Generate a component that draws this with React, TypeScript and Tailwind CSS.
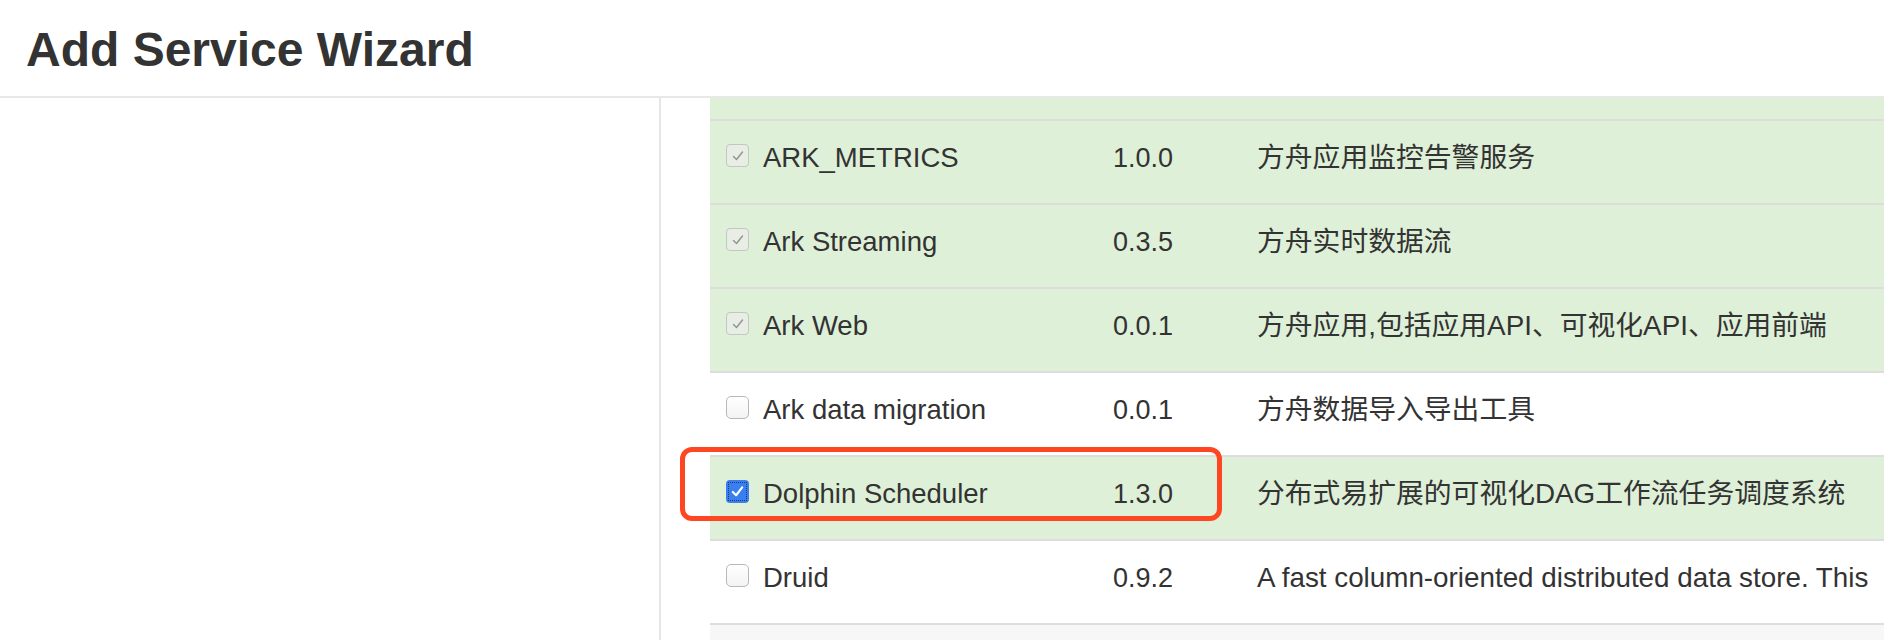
import React from "react";

type Kind = "locked" | "checked" | "empty";

function Check({ kind }: { kind: Kind }) {
  if (kind === "locked") {
    return (
      <span className="mt-[6px] flex h-[23px] w-[23px] shrink-0 items-center justify-center rounded-[4px] border border-[#c2c7bf] bg-[#e8ede5]">
        <svg width="16" height="16" viewBox="0 0 16 16" fill="none">
          <path d="M3.5 8.5 L6.5 11.5 L12.5 4" stroke="#8f958c" strokeWidth="1.4" strokeLinecap="round" strokeLinejoin="round" />
        </svg>
      </span>
    );
  }
  if (kind === "checked") {
    return (
      <span className="mt-[6px] flex h-[23px] w-[23px] shrink-0 items-center justify-center rounded-[4px] bg-[#3a7ff2]">
        <span className="flex h-[19px] w-[19px] items-center justify-center border border-dotted border-[#2a3550]">
          <svg width="15" height="15" viewBox="0 0 16 16" fill="none">
            <path d="M3 8.5 L6.5 12 L13 3.5" stroke="#ffffff" strokeWidth="2.2" strokeLinecap="round" strokeLinejoin="round" />
          </svg>
        </span>
      </span>
    );
  }
  return (
    <span className="mt-[6px] block h-[23px] w-[23px] shrink-0 rounded-[5px] border border-[#b8b8b8] bg-gradient-to-b from-white to-[#f3f3f3]" />
  );
}

const rows: { name: string; version: string; desc: string; kind: Kind; green: boolean }[] = [
  { name: "ARK_METRICS", version: "1.0.0", desc: "方舟应用监控告警服务", kind: "locked", green: true },
  { name: "Ark Streaming", version: "0.3.5", desc: "方舟实时数据流", kind: "locked", green: true },
  { name: "Ark Web", version: "0.0.1", desc: "方舟应用,包括应用API、可视化API、应用前端", kind: "locked", green: true },
  { name: "Ark data migration", version: "0.0.1", desc: "方舟数据导入导出工具", kind: "empty", green: false },
  { name: "Dolphin Scheduler", version: "1.3.0", desc: "分布式易扩展的可视化DAG工作流任务调度系统", kind: "checked", green: true },
  {
    name: "Druid",
    version: "0.9.2",
    desc: "A fast column-oriented distributed data store. This",
    kind: "empty",
    green: false,
  },
];

export default function App() {
  const font = { fontFamily: '"Liberation Sans", "Noto Sans CJK SC", Arial, sans-serif' };
  return (
    <div className="relative h-[640px] w-full overflow-hidden bg-white text-[#333333]" style={font}>
      <header className="h-[98px] border-b-2 border-[#e8e8e8] pl-[26px] pt-[26px]">
        <h1 className="text-[48px] font-bold leading-[47px] text-[#333333]">Add Service Wizard</h1>
      </header>
      <div className="flex h-[542px]">
        <aside className="w-[661px] shrink-0 border-r-2 border-[#e6e6e6] bg-white" />
        <main className="flex min-w-0 flex-1 flex-col overflow-hidden pl-[49px]">
          <div className="h-[21px] shrink-0 bg-[#dff0d8]" />
          {rows.map((r) => (
            <div
              key={r.name}
              className={`flex h-[84px] shrink-0 border-t-2 border-[#dddddd] pl-[16px] pt-[17px] ${r.green ? "bg-[#dff0d8]" : "bg-white"}`}
            >
              <div className="flex w-[387px] shrink-0 items-start gap-[14px]">
                <Check kind={r.kind} />
                <span className="text-[27.5px] leading-[40px]">{r.name}</span>
              </div>
              <div className="w-[144px] shrink-0 text-[27px] leading-[40px]">{r.version}</div>
              <div className="whitespace-nowrap text-[27.8px] leading-[40px]">{r.desc}</div>
            </div>
          ))}
          <div className="flex-1 border-t-2 border-[#dddddd] bg-[#f7f7f7]" />
        </main>
      </div>
      <div className="pointer-events-none absolute left-[680px] top-[447px] h-[74px] w-[542px] rounded-[12px] border-[5px] border-[#ff4623]" />
    </div>
  );
}
